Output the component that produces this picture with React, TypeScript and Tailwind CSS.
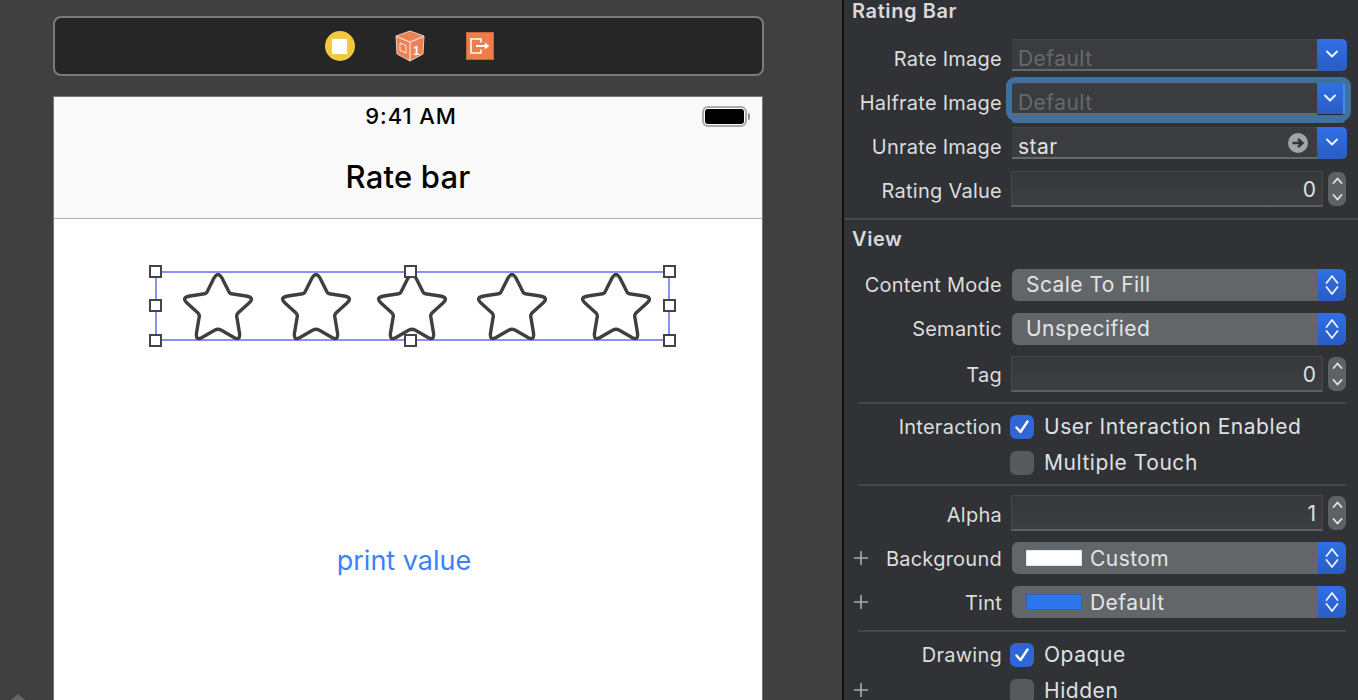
import React from "react";

const font = { fontFamily: '"Inter", "Liberation Sans", sans-serif' };

function Down() {
  return (
    <svg width="14" height="10" viewBox="0 0 14 10" fill="none" stroke="#eef3ff" strokeWidth="2" strokeLinecap="round" strokeLinejoin="round">
      <path d="M2 2.5 L7 7.5 L12 2.5" />
    </svg>
  );
}

function PopupArrows() {
  return (
    <svg width="14" height="22" viewBox="0 0 14 22" fill="none" stroke="#eef3ff" strokeWidth="1.8" strokeLinecap="round" strokeLinejoin="round">
      <path d="M1.5 9 L7 2 L12.5 9" />
      <path d="M1.5 13 L7 20 L12.5 13" />
    </svg>
  );
}

function StepArrows() {
  return (
    <svg width="11" height="26" viewBox="0 0 11 26" fill="none" stroke="#e4e5e6" strokeWidth="1.8" strokeLinecap="round" strokeLinejoin="round">
      <path d="M1.5 7 L5.5 2.5 L9.5 7" />
      <path d="M1.5 19 L5.5 23.5 L9.5 19" />
    </svg>
  );
}

function Plus() {
  return (
    <svg width="14" height="14" viewBox="0 0 14 14" stroke="#a9abad" strokeWidth="1.6" className="shrink-0">
      <path d="M7 0 V14 M0 7 H14" />
    </svg>
  );
}

function Row({ label, plus, nudge, h = "h-[44px]", children }: { label?: string; plus?: boolean; nudge?: boolean; h?: string; children: React.ReactNode }) {
  return (
    <div className={`flex items-center ${h}`}>
      <div className={`w-[158px] shrink-0 flex items-center justify-between pl-[10px] ${nudge ? "pt-[2px]" : ""}`}>
        <span className="w-[14px] mb-[3px]">{plus ? <Plus /> : null}</span>
        <span className="text-[20px] leading-[24px] text-[#dcdddd] whitespace-nowrap tracking-[0.25px]">{label}</span>
      </div>
      {children}
    </div>
  );
}

function ImageCombo({ value, muted, arrow, focus }: { value: string; muted?: boolean; arrow?: boolean; focus?: boolean }) {
  return (
    <div className={`ml-[10px] mb-[6px] h-[32px] flex ${focus ? "w-[333px] outline-[6px] outline outline-[#40719e] rounded-[3px] shadow-[0_8px_0_0_#40719e]" : "w-[335px]"}`}>
      <div className="flex-1 flex items-center justify-between pl-[6px] pr-[9px] bg-[#3a3c40] border-t border-t-[#424447] border-b-2 border-b-[#66686a]">
        <span className={`pt-[8px] text-[21px] leading-[24px] tracking-[0.45px] ${muted ? "text-[#66686b]" : "text-[#e3e3e3]"}`}>{value}</span>
        {arrow ? (
          <svg width="20" height="20" viewBox="0 0 20 20">
            <circle cx="10" cy="10" r="10" fill="#a3a4a6" />
            <path d="M4.5 10 H14 M10 6 L14.5 10 L10 14" fill="none" stroke="#33353a" strokeWidth="2.4" />
          </svg>
        ) : null}
      </div>
      <div className={`flex items-center justify-center pb-[2px] bg-gradient-to-b from-[#3070e4] to-[#295cc6] ${focus ? "w-[28px] border-r-2 border-r-[#3f8aea] border-b border-b-[#1b2a40]" : "w-[30px] rounded-r-[5px]"}`}>
        <Down />
      </div>
    </div>
  );
}

function Popup({ children }: { children: React.ReactNode }) {
  return (
    <div className="ml-[10px] w-[334px] h-[32px] flex rounded-[6px] overflow-hidden">
      <div className="flex-1 flex items-center gap-[8px] pl-[14px] bg-[#636668] text-[21px] leading-[24px] tracking-[0.45px] text-[#e3e4e4]">{children}</div>
      <div className="w-[28px] flex items-center justify-center bg-gradient-to-b from-[#3070e4] to-[#295cc6]">
        <PopupArrows />
      </div>
    </div>
  );
}

function Stepper({ value }: { value: string }) {
  return (
    <div className="ml-[9px] mb-[2px] flex items-center gap-[5px]">
      <div className="w-[312px] h-[36px] flex items-center justify-end pr-[6px] pt-[2px] bg-gradient-to-b from-[#35373a] to-[#3c3e42] border border-[#45474a] border-b-2 border-b-[#5d5f61] text-[21px] leading-[24px] text-[#dfe0e0]">
        {value}
      </div>
      <div className="w-[18px] h-[34px] rounded-[7px] bg-[#5f6163] flex items-center justify-center">
        <StepArrows />
      </div>
    </div>
  );
}

function Check({ label, on }: { label: string; on?: boolean }) {
  return (
    <div className="ml-[8px] flex items-center gap-[10px]">
      <div className={`w-[24px] h-[24px] rounded-[6px] flex items-center justify-center ${on ? "bg-[#2e66d6]" : "bg-[#57595c]"}`}>
        {on ? (
          <svg width="18" height="18" viewBox="0 0 18 18" fill="none" stroke="#ffffff" strokeWidth="2.4" strokeLinecap="round" strokeLinejoin="round">
            <path d="M3.5 9.5 L7.5 14 L14.5 3.5" />
          </svg>
        ) : null}
      </div>
      <span className="text-[21px] leading-[24px] tracking-[0.55px] text-[#dfe0e0] whitespace-nowrap">{label}</span>
    </div>
  );
}

function Star({ className }: { className?: string }) {
  return (
    <svg width="70" height="68" viewBox="0 0 70 68" fill="none" stroke="#3f3f3f" strokeWidth="3.4" className={`shrink-0 blur-[0.5px] ${className ?? ""}`}>
      <path d="M31 5 Q35 -2 39 5 L46 19 Q47 21 50 21 L63 23 Q72 24.5 66 30 L55 40 Q53 42 54 45 L56.5 60 Q57.5 68 51 64.5 L38 57 Q35 55.5 32 57 L19 64.5 Q12.5 68 13.5 60 L16 45 Q17 42 15 40 L4 30 Q-2 24.5 7 23 L20 21 Q23 21 24 19 Z" />
    </svg>
  );
}

function Handle({ className }: { className: string }) {
  return <div className={`absolute w-[13px] h-[13px] bg-white border-2 border-[#444444] ${className}`} />;
}

function Divider() {
  return <div className="ml-[14px] mr-[12px] h-[2px] bg-[#45474a]" />;
}

export default function App() {
  return (
    <div className="flex w-[1358px] h-[700px] overflow-hidden" style={font}>
      <div className="relative w-[842px] shrink-0 bg-[#404040] pl-[53px] pt-[16px]">
        <div className="w-[711px] h-[60px] rounded-[8px] border-2 border-[#7b7b7b] bg-[#262626] flex items-center justify-center pl-[1px]">
          <div className="w-[30px] h-[30px] rounded-full bg-[#f4c83d] flex items-center justify-center">
            <div className="w-[15px] h-[15px] bg-white outline-1 outline-dotted outline-[#e4cf8a]" />
          </div>
          <svg width="30" height="32" viewBox="0 0 30 32" className="ml-[40px]">
            <path d="M15 1 L29 6 L28 24 L15 31 L2 24 L1 6 Z" fill="#ee8051" stroke="#d9d4cf" strokeWidth="1" />
            <path d="M1.5 6.5 L15 12 L28.5 6.5 M15 12 V31" fill="none" stroke="#f1e3da" strokeWidth="1.2" />
            <path d="M5 13 L11 15.5 V23 L5 20.5 Z" fill="none" stroke="#f7e6dc" strokeWidth="1" />
            <text x="18" y="25" fontSize="12" fontWeight="700" fill="#ffffff" fontFamily="Liberation Sans, sans-serif">1</text>
          </svg>
          <div className="ml-[41px] w-[28px] h-[28px] bg-[#ef7d4a] border border-[#c4653b] flex items-center justify-center">
            <svg width="20" height="16" viewBox="0 0 20 16" fill="none" stroke="#ffffff" strokeWidth="1.6">
              <path d="M11 4.5 V1 H1 V15 H11 V11.5" />
              <path d="M6 8 H16" strokeWidth="2" />
              <path d="M15 5 L19 8 L15 11 Z" fill="#ffffff" strokeWidth="0.5" />
            </svg>
          </div>
        </div>

        <div className="mt-[20px] w-[710px] h-[700px] border border-[#767676] border-b-0 bg-white">
          <div className="h-[122px] bg-[#f9f9f9] border-b border-b-[#b2b2b2] relative flex flex-col items-center">
            <div className="pt-[6px] ml-[6px] text-[22px] leading-[26px] font-medium tracking-[0.9px] text-black">9:41 AM</div>
            <div className="mt-[30px] text-[31px] leading-[36px] font-medium tracking-[0.2px] text-black">Rate bar</div>
            <div className="absolute left-[648px] top-[9px] flex items-center">
              <div className="w-[45px] h-[21px] rounded-[6px] border-2 border-[#a9a9a9] p-[1px]">
                <div className="w-full h-full rounded-[3px] bg-black" />
              </div>
              <div className="ml-[1px] w-[2px] h-[7px] bg-[#8e8e8e] rounded-r-[2px]" />
            </div>
          </div>
          <div className="pt-[52px] pl-[101px]">
            <div className="relative w-[515px] h-[70px] border-2 border-[#8a90f6] flex items-start pl-[26px]">
              <Star />
              <Star className="ml-[28px]" />
              <Star className="ml-[26px]" />
              <Star className="ml-[30px]" />
              <Star className="ml-[34px]" />
              <Handle className="left-[-8px] top-[-8px]" />
              <Handle className="left-[247px] top-[-8px]" />
              <Handle className="right-[-8px] top-[-8px]" />
              <Handle className="left-[-8px] top-[26px]" />
              <Handle className="right-[-8px] top-[26px]" />
              <Handle className="left-[-8px] bottom-[-8px]" />
              <Handle className="left-[247px] bottom-[-8px]" />
              <Handle className="right-[-8px] bottom-[-8px]" />
            </div>
          </div>
          <div className="mt-[204px] text-center text-[27px] leading-[32px] text-[#3a82f7] pr-[8px]">print value</div>
        </div>
        <div className="absolute left-[11px] bottom-0 w-0 h-0 border-l-[7px] border-r-[7px] border-b-[6px] border-l-transparent border-r-transparent border-b-[#666666]" />
      </div>

      <div className="w-[2px] shrink-0 bg-[#111111]" />

      <div className="flex-1 bg-[#303236]">
        <div className="h-[22px] pl-[8px] text-[20px] leading-[22px] font-semibold tracking-[0.6px] text-[#d9dada]">Rating Bar</div>
        <div className="mt-[14px]">
          <Row nudge label="Rate Image"><ImageCombo value="Default" muted /></Row>
          <Row nudge label="Halfrate Image"><ImageCombo value="Default" muted focus /></Row>
          <Row nudge label="Unrate Image"><ImageCombo value="star" arrow /></Row>
          <Row nudge label="Rating Value"><Stepper value="0" /></Row>
        </div>
        <div className="mt-[6px] h-[2px] bg-[#45474a]" />
        <div className="mt-[8px] h-[22px] pl-[8px] text-[20px] leading-[22px] font-semibold tracking-[0.6px] text-[#d9dada]">View</div>
        <div className="mt-[13px]">
          <Row label="Content Mode"><Popup>Scale To Fill</Popup></Row>
          <Row label="Semantic"><Popup>Unspecified</Popup></Row>
          <Row label="Tag" h="h-[48px]"><Stepper value="0" /></Row>
        </div>
        <div className="mt-[3px]"><Divider /></div>
        <div className="mt-[5px]">
          <Row label="Interaction" h="h-[36px]"><Check label="User Interaction Enabled" on /></Row>
          <Row h="h-[36px]"><Check label="Multiple Touch" /></Row>
        </div>
        <div className="mt-[3px]"><Divider /></div>
        <div className="mt-[6px]">
          <Row nudge label="Alpha"><Stepper value="1" /></Row>
          <Row nudge label="Background" plus>
            <Popup>
              <div className="w-[56px] h-[16px] bg-white border border-[#e6e6e6]" />
              <span className="pt-[2px]">Custom</span>
            </Popup>
          </Row>
          <Row nudge label="Tint" plus>
            <Popup>
              <div className="w-[56px] h-[16px] bg-[#2f76ee] border border-[#2a62c0]" />
              <span className="pt-[2px]">Default</span>
            </Popup>
          </Row>
        </div>
        <div className="mt-[6px]"><Divider /></div>
        <div className="mt-[5px]">
          <Row label="Drawing" h="h-[36px]"><Check label="Opaque" on /></Row>
          <Row plus h="h-[36px]"><Check label="Hidden" /></Row>
        </div>
      </div>
    </div>
  );
}
